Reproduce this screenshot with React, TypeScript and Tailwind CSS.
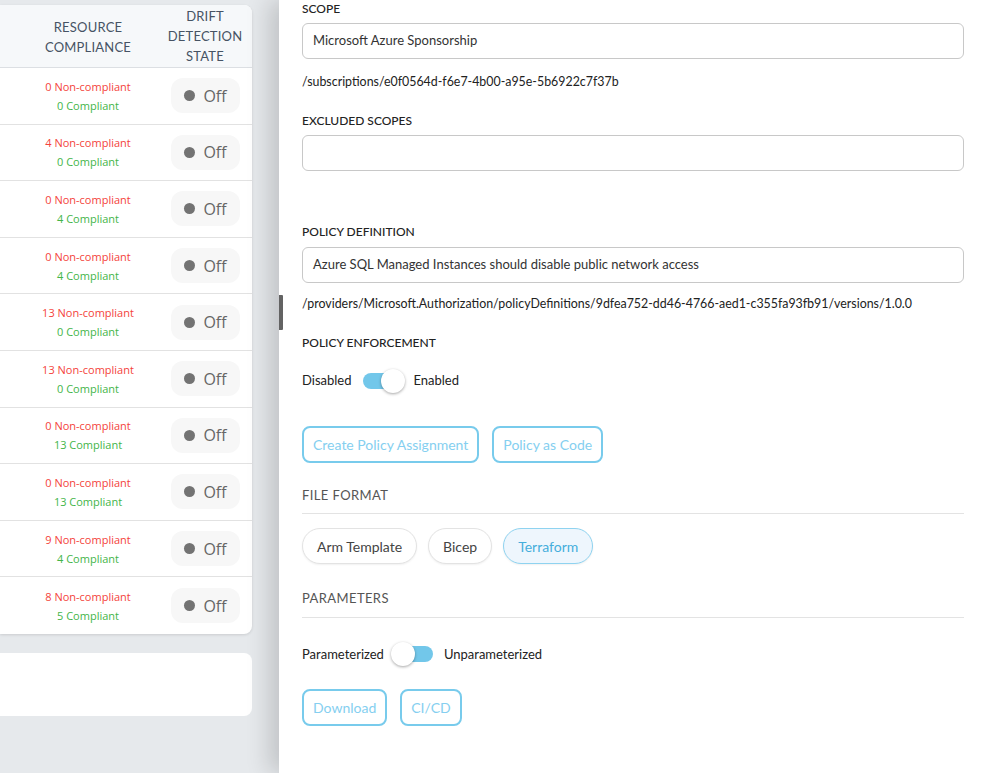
import React from "react";

type Row = { non: number; ok: number };

const rows: Row[] = [
  { non: 0, ok: 0 },
  { non: 4, ok: 0 },
  { non: 0, ok: 4 },
  { non: 0, ok: 4 },
  { non: 13, ok: 0 },
  { non: 13, ok: 0 },
  { non: 0, ok: 13 },
  { non: 0, ok: 13 },
  { non: 9, ok: 4 },
  { non: 8, ok: 5 },
];

function OffPill() {
  return (
    <div className="flex h-[35px] w-[69px] items-center justify-center gap-[8px] rounded-[12px] bg-[#f7f7f7]">
      <span className="h-[11px] w-[11px] rounded-full bg-[#737373]" />
      <span className="font-['Open_Sans',sans-serif] text-[16px] leading-none text-[#666]">Off</span>
    </div>
  );
}

function PolicyTable() {
  return (
    <div className="overflow-hidden rounded-r-[8px] bg-white shadow-[0_1px_3px_rgba(0,0,0,0.12)]">
      <div className="flex h-[63px] items-center border-b border-[#dcdfe3] bg-[#f6f8fa] font-['Lato',sans-serif] text-[13px] uppercase leading-[20px] tracking-[0.2px] text-[#465364]">
        <div className="w-[170px] pl-[6px] pt-[2px] text-center">
          Resource
          <br />
          Compliance
        </div>
        <div className="flex w-[82px] justify-center pr-[12px] text-center">
          <span className="whitespace-nowrap">
            Drift
            <br />
            Detection
            <br />
            State
          </span>
        </div>
      </div>
      {rows.map((r, i) => (
        <div
          key={i}
          className={`flex h-[56.6px] items-center ${i < rows.length - 1 ? "border-b border-[#e2e2e2]" : ""}`}
        >
          <div className="flex w-[170px] flex-col items-center pl-[6px] font-['Open_Sans',sans-serif] text-[11px] leading-[19px]">
            <span className="text-[#f4433b]">{r.non} Non-compliant</span>
            <span className="text-[#43b549]">{r.ok} Compliant</span>
          </div>
          <div className="flex w-[82px] justify-end pr-[12px]">
            <OffPill />
          </div>
        </div>
      ))}
    </div>
  );
}

function FieldLabel({ children }: { children: React.ReactNode }) {
  return <div className="text-[12px] font-medium uppercase leading-[16px] text-[#222]">{children}</div>;
}

function TextBox({ value }: { value?: string }) {
  return (
    <div className="flex h-[36px] items-center rounded-[6px] border border-[#c8c8c8] px-[10px] text-[13px] text-[#333]">
      {value}
    </div>
  );
}

function Toggle({ on }: { on: boolean }) {
  return (
    <div className="relative h-[16px] w-[38px] rounded-full bg-[#72c7ea]">
      <span
        className={`absolute top-[-4px] h-[24px] w-[24px] rounded-full bg-white shadow-[0_1px_3px_rgba(0,0,0,0.35)] ${on ? "right-[-4px]" : "left-[-4px]"}`}
      />
    </div>
  );
}

function OutlineButton({ children }: { children: React.ReactNode }) {
  return (
    <button className="h-[37px] rounded-[8px] border-2 border-[#78cbec] bg-white px-[9px] text-[14px] text-[#85cff0]">
      {children}
    </button>
  );
}

function Chip({ children, active }: { children: React.ReactNode; active?: boolean }) {
  return (
    <button
      className={`h-[36px] rounded-full border px-[14px] text-[14px] shadow-[0_1px_2px_rgba(0,0,0,0.06)] ${
        active ? "border-[#8fd3f0] bg-[#eef6fd] text-[#45aedc]" : "border-[#e3e3e3] bg-white text-[#444]"
      }`}
    >
      {children}
    </button>
  );
}

function SectionTitle({ children }: { children: React.ReactNode }) {
  return (
    <div className="border-b border-[#e3e3e3] pb-[8px] text-[13px] uppercase tracking-[0.4px] text-[#555]">
      {children}
    </div>
  );
}

function AssignmentPanel() {
  return (
    <div className="relative h-full flex-1 bg-white font-['Lato',sans-serif] shadow-[-10px_0_22px_rgba(0,0,0,0.16)]">
      <span className="absolute left-0 top-[295px] h-[35px] w-[4px] rounded-r-[1px] bg-[#636363]" />
      <div className="flex flex-col pl-[23px] pr-[23px] pt-[1px]">
        <FieldLabel>Scope</FieldLabel>
        <div className="mt-[6px]">
          <TextBox value="Microsoft Azure Sponsorship" />
        </div>
        <div className="mt-[14px] text-[12.4px] leading-[18px] text-[#222]">
          /subscriptions/e0f0564d-f6e7-4b00-a95e-5b6922c7f37b
        </div>
        <div className="mt-[22px]">
          <FieldLabel>Excluded Scopes</FieldLabel>
        </div>
        <div className="mt-[6px]">
          <TextBox />
        </div>
        <div className="mt-[53px]">
          <FieldLabel>Policy Definition</FieldLabel>
        </div>
        <div className="mt-[7px]">
          <TextBox value="Azure SQL Managed Instances should disable public network access" />
        </div>
        <div className="mt-[12px] text-[12.4px] leading-[18px] text-[#222]">
          /providers/Microsoft.Authorization/policyDefinitions/9dfea752-dd46-4766-aed1-c355fa93fb91/versions/1.0.0
        </div>
        <div className="mt-[22px]">
          <FieldLabel>Policy Enforcement</FieldLabel>
        </div>
        <div className="mt-[20px] flex items-center gap-[12px] text-[13px] text-[#222]">
          <span>Disabled</span>
          <Toggle on />
          <span>Enabled</span>
        </div>
        <div className="mt-[35px] flex gap-[13px]">
          <OutlineButton>Create Policy Assignment</OutlineButton>
          <OutlineButton>Policy as Code</OutlineButton>
        </div>
        <div className="mt-[23px]">
          <SectionTitle>File Format</SectionTitle>
        </div>
        <div className="mt-[14px] flex gap-[11px]">
          <Chip>Arm Template</Chip>
          <Chip>Bicep</Chip>
          <Chip active>Terraform</Chip>
        </div>
        <div className="mt-[25px]">
          <SectionTitle>Parameters</SectionTitle>
        </div>
        <div className="mt-[27px] flex items-center gap-[11px] text-[13px] text-[#222]">
          <span>Parameterized</span>
          <Toggle on={false} />
          <span>Unparameterized</span>
        </div>
        <div className="mt-[25px] flex gap-[13px]">
          <OutlineButton>Download</OutlineButton>
          <OutlineButton>CI/CD</OutlineButton>
        </div>
      </div>
    </div>
  );
}

export default function App() {
  return (
    <div className="flex h-[773px] w-[987px] overflow-hidden bg-[#e6e9ec]">
      <div className="w-[279px] shrink-0 pr-[27px] pt-[5px]">
        <PolicyTable />
        <div className="mt-[19px] h-[63px] rounded-r-[8px] bg-white" />
      </div>
      <AssignmentPanel />
    </div>
  );
}
